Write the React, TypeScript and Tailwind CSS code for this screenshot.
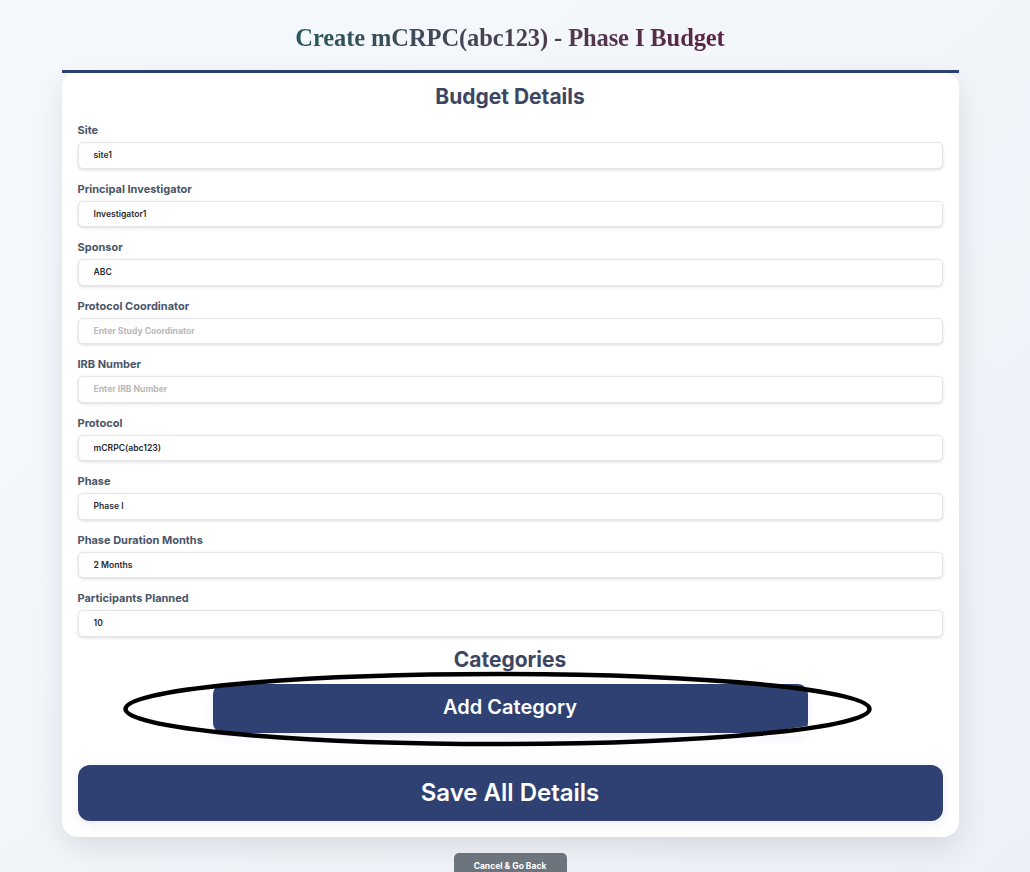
import React from 'react';

const fields = [
    { label: 'Site', value: 'site1' },
    { label: 'Principal Investigator', value: 'Investigator1' },
    { label: 'Sponsor', value: 'ABC' },
    { label: 'Protocol Coordinator', placeholder: 'Enter Study Coordinator' },
    { label: 'IRB Number', placeholder: 'Enter IRB Number' },
    { label: 'Protocol', value: 'mCRPC(abc123)' },
    { label: 'Phase', value: 'Phase I' },
    { label: 'Phase Duration Months', value: '2 Months' },
    { label: 'Participants Planned', value: '10' },
];

export default function App() {
    return (
        <div className="h-screen overflow-hidden bg-gradient-to-br from-[#f6f9fc] to-[#edf0f7] pr-[10px] font-['Inter','Liberation_Sans',sans-serif]">
            {/* Title */}
            <h1 className="h-[70px] pt-[22px] text-center font-['Liberation_Serif',serif] text-[24.5px] leading-[32px] font-bold tracking-[-0.1px]">
                <span className="bg-gradient-to-r from-[#24585f] to-[#5a2346] bg-clip-text text-transparent">
                    Create mCRPC(abc123) - Phase I Budget
                </span>
            </h1>

            <div className="mx-auto w-[897px]">
                <div className="h-[3px] bg-[#2f4172]"></div>

                {/* Card */}
                <div className="h-[764px] rounded-b-[16px] rounded-t-[14px] bg-white px-4 pt-[9px] shadow-[0_10px_30px_rgba(0,0,0,0.1)]">
                    <h2 className="text-center text-[21px] leading-[30px] font-bold text-[#3c4663]">Budget Details</h2>

                    <div className="mt-[9px] flex flex-col gap-[11px]">
                        {fields.map((field) => (
                            <div key={field.label}>
                                <label className="block h-[21px] text-[11px] leading-[19px] font-bold text-[#4a5568]">
                                    {field.label}
                                </label>
                                <input
                                    readOnly
                                    value={field.value ?? ''}
                                    placeholder={field.placeholder}
                                    className="block h-[26.5px] w-full rounded-[5px] border border-[#e4e6ea] bg-white px-[15px] text-[8.6px] font-semibold text-[#2a2a2a] shadow-[0_1px_3px_rgba(0,0,0,0.15)] outline-none placeholder:font-bold placeholder:text-[#b8b8b8]"
                                />
                            </div>
                        ))}
                    </div>

                    <h2 className="mt-[8.5px] text-center text-[21px] leading-[30px] font-bold text-[#3c4663]">Categories</h2>

                    {/* Add Category, with the hand drawn ring over it */}
                    <div className="relative mt-[9px] flex justify-center">
                        <button className="h-[49px] w-[595px] rounded-[10px] bg-[#2f4172] pb-[3px] text-[20px] font-semibold text-white shadow-[0_4px_10px_rgba(80,80,200,0.1)]">
                            Add Category
                        </button>
                        <svg className="absolute left-[44px] top-[-14px]" width="752" height="78" viewBox="0 0 752 78" fill="none">
                            <path d="M645 62 L692 55 L692 66 L645 66 Z" fill="#fff" />
                            <ellipse cx="375.5" cy="39" rx="372" ry="35" stroke="#000" strokeWidth="4.5" />
                        </svg>
                    </div>

                    <button className="mt-[32px] block h-[56px] w-full rounded-[12px] bg-[#2f4172] text-[24px] font-semibold text-white shadow-[0_4px_10px_rgba(80,80,200,0.1)]">
                        Save All Details
                    </button>
                </div>
            </div>

            <div className="mt-[16px] flex justify-center">
                <button className="h-[32px] w-[113px] rounded-[5px] bg-[#6c757d] pb-[5px] text-[8.5px] font-bold text-white">
                    Cancel &amp; Go Back
                </button>
            </div>
        </div>
    );
}
